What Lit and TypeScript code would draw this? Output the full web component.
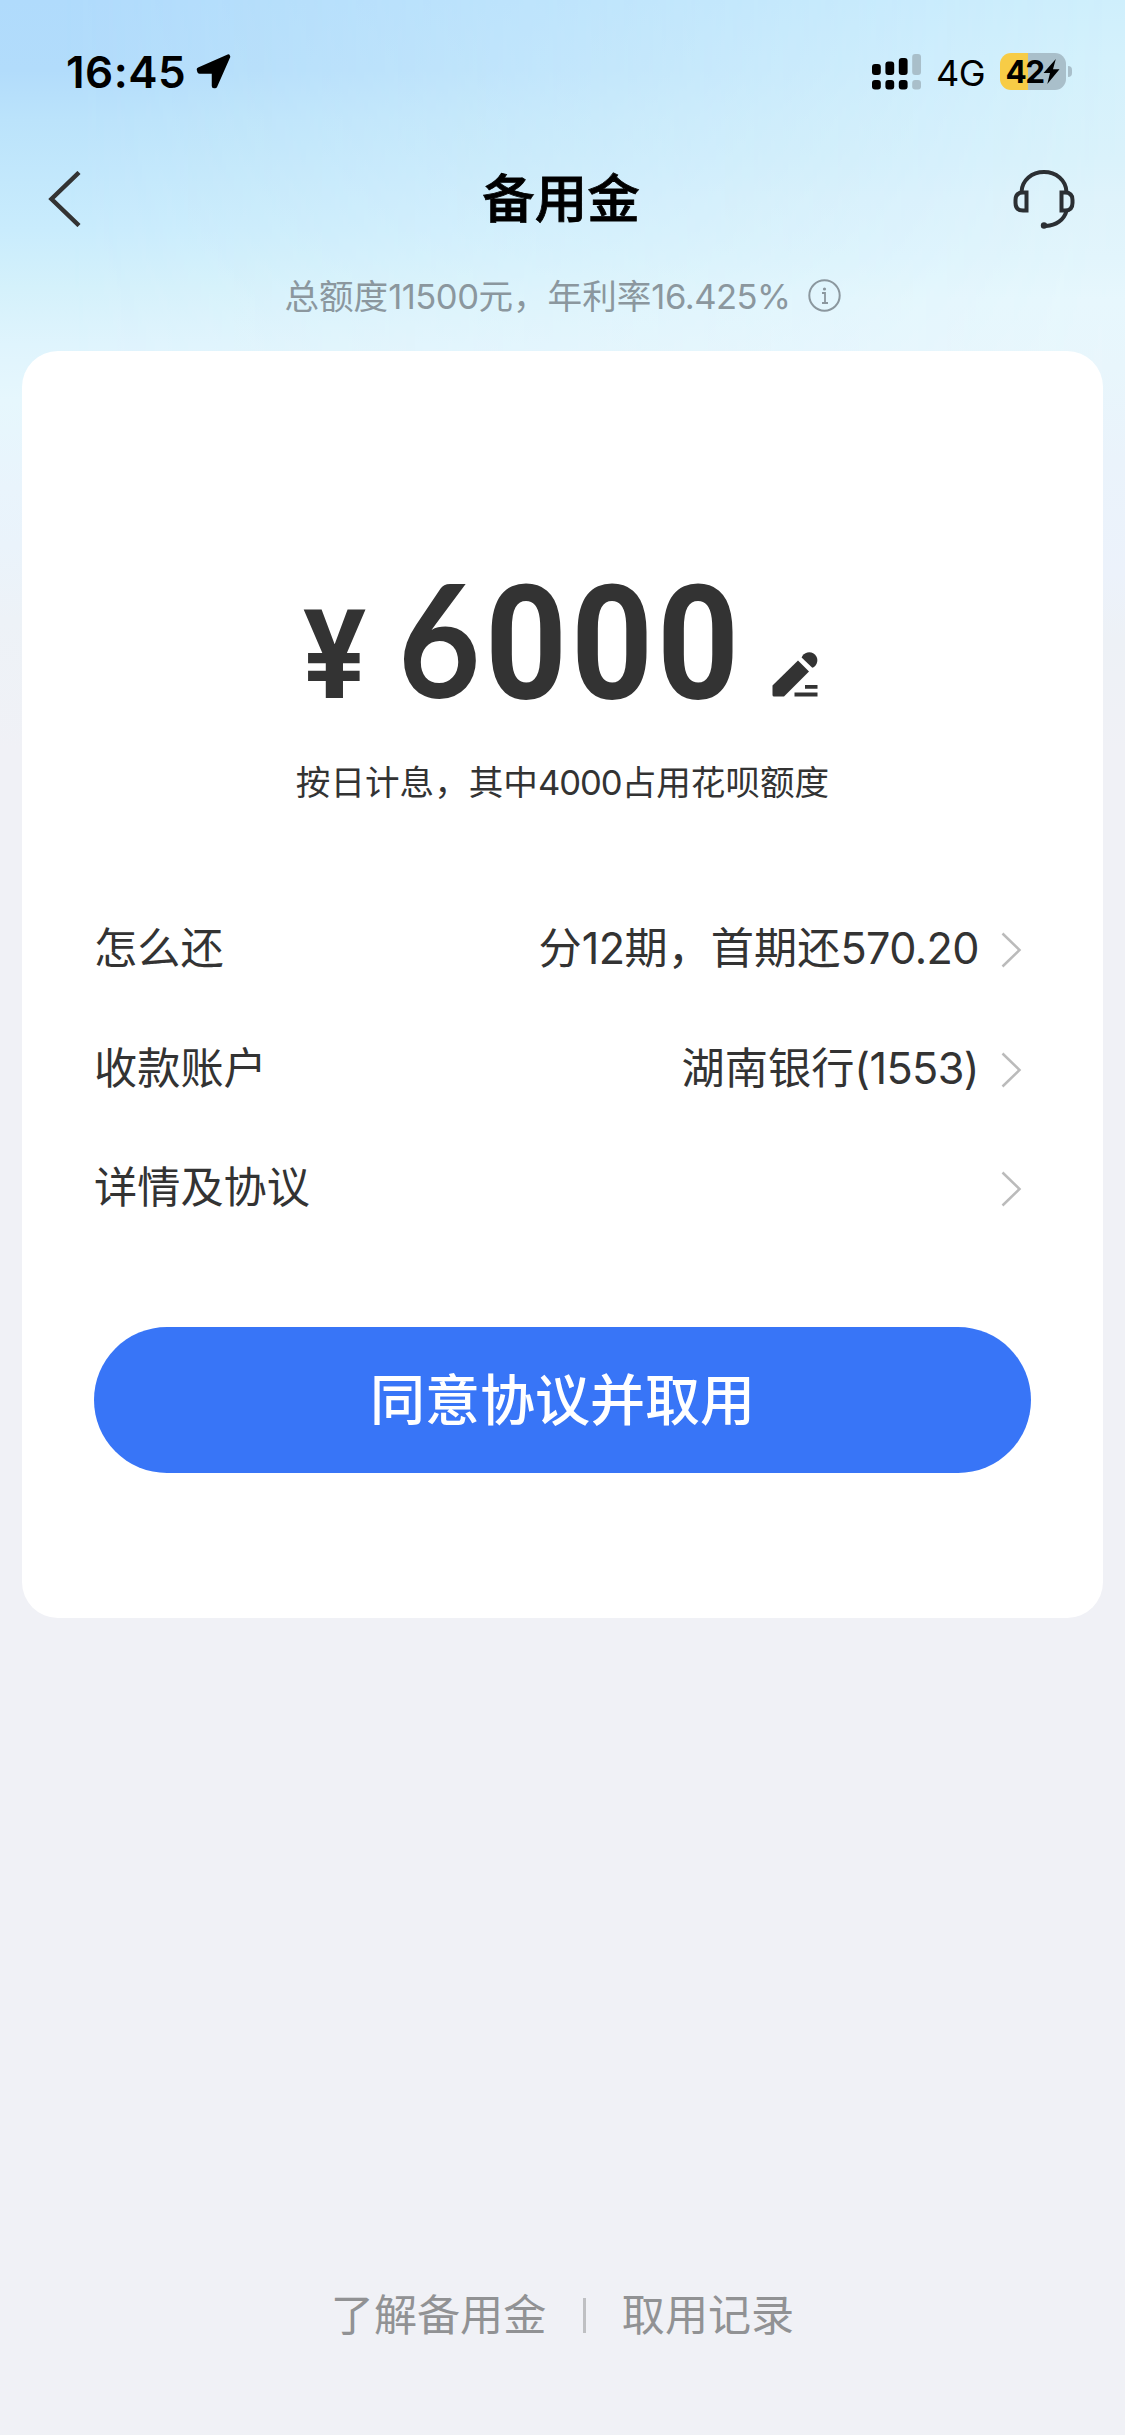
import { LitElement, html, svg, css } from "lit";
import { customElement, property } from "lit/decorators.js";

const textBase = css`
  :host {
    font-family: Inter, "Noto Sans CJK SC", sans-serif;
  }
`;

@customElement("status-bar")
export class StatusBar extends LitElement {
  static styles = [
    textBase,
    css`
      :host {
        display: flex;
        align-items: center;
        height: 142px;
        padding: 0 53px 0 66px;
        box-sizing: border-box;
        color: #000;
      }
      .time {
        font-size: 44px;
        font-weight: 600;
        line-height: 44px;
        letter-spacing: 0.5px;
        padding-top: 1px;
      }
      .arrow {
        margin-left: 10px;
      }
      .signal {
        margin-left: auto;
        padding-top: 1px;
      }
      .network {
        margin-left: 14px;
        font-size: 36px;
        line-height: 44px;
        letter-spacing: -0.5px;
        padding-top: 4px;
      }
      .battery {
        margin-left: 15px;
        display: flex;
        align-items: center;
        justify-content: center;
        width: 66px;
        height: 37px;
        border-radius: 11px;
        background: linear-gradient(to right, #f7cc46 28px, #a9bfca 28px);
      }
      .level {
        font-size: 31.5px;
        font-weight: 700;
        line-height: 37px;
        letter-spacing: -1.6px;
      }
      .nub {
        margin-left: 2px;
        width: 4px;
        height: 11px;
        border-radius: 0 6px 6px 0;
        background: #a9bfca;
      }
    `,
  ];

  render() {
    const bars = [
      [0, 10, 11],
      [13.4, 7.5, 13.5],
      [26.8, 4, 17],
      [40.2, 0, 21],
    ];
    return html`
      <span class="time">16:45</span>
      <svg class="arrow" width="35" height="35" viewBox="0 0 35 35">
        <path
          d="M3 15.500 32 2.700 19 32 18 32 18 17.500 3.500 17.500Z"
          stroke="#000"
          stroke-width="4.500"
          stroke-linejoin="round"
        />
      </svg>
      <svg class="signal" width="50" height="36" viewBox="0 0 50 36">
        ${bars.map(
          ([x, y, h], i) => svg`
            <rect x=${x} y=${y} width="8.800" height=${h} rx="3" fill=${i < 3 ? "#000" : "#a9bfca"} />
            <rect x=${x} y="26" width="8.800" height="9.500" rx="3" fill=${i < 3 ? "#000" : "#a9bfca"} />
          `,
        )}
      </svg>
      <span class="network">4G</span>
      <div class="battery">
        <span class="level">42</span>
        <svg width="17" height="25" viewBox="0 0 17 25">
          <path d="M12.800 0 0.500 14H7L4.300 25 16.500 10.300H10Z" />
        </svg>
      </div>
      <div class="nub"></div>
    `;
  }
}

@customElement("nav-bar")
export class NavBar extends LitElement {
  static styles = [
    textBase,
    css`
      :host {
        display: flex;
        align-items: center;
        justify-content: space-between;
        height: 114px;
        padding: 0 50px 0 47px;
      }
      .title {
        font-size: 52.5px;
        font-weight: 500;
        -webkit-text-stroke: 0.8px #000;
        line-height: 60px;
        color: #000;
      }
      .side {
        width: 64px;
        display: flex;
      }
      .end {
        justify-content: flex-end;
      }
    `,
  ];

  render() {
    return html`
      <div class="side">
        <svg width="36" height="56" viewBox="0 0 36 56" fill="none">
          <path d="M32 1.500 4.500 28 32 54.500" stroke="#333" stroke-width="4.500" />
        </svg>
      </div>
      <span class="title">备用金</span>
      <div class="side end">
        <svg width="62" height="60" viewBox="0 0 62 60" fill="none" stroke="#2b2f33" stroke-width="4">
          <path d="M8.500 23C9 11 19 3 31 3S53 11 53.500 23" />
          <path d="M13.500 23.500H10Q2.500 23.500 2.500 31V34Q2.500 41.500 10 41.500H13.500Z" />
          <path d="M48.500 23.500H52Q59.500 23.500 59.500 31V34Q59.500 41.500 52 41.500H48.500Z" />
          <path d="M53.500 42C51 51 43 56.500 33 57" />
          <circle cx="31" cy="56.500" r="3.200" fill="#2b2f33" stroke="none" />
        </svg>
      </div>
    `;
  }
}

@customElement("info-row")
export class InfoRow extends LitElement {
  @property() label = "";

  static styles = [
    textBase,
    css`
      :host {
        display: flex;
        align-items: center;
        height: 119.7px;
        font-size: 43.2px;
        line-height: 60px;
        color: #333;
      }
      .label {
        flex: 1;
      }
      .value {
        margin-right: 22px;
      }
      .chevron {
        margin-top: 4px;
      }
    `,
  ];

  render() {
    return html`
      <span class="label">${this.label}</span>
      <span class="value"><slot></slot></span>
      <svg class="chevron" width="21" height="36" viewBox="0 0 21 36" fill="none">
        <path d="M1.500 1.500 18.500 18 1.500 34.500" stroke="#bbb" stroke-width="2.500" />
      </svg>
    `;
  }
}

@customElement("app-root")
export class AppRoot extends LitElement {
  static styles = [
    textBase,
    css`
      :host {
        display: block;
      }
      .page {
        position: relative;
        display: flex;
        flex-direction: column;
        width: 1125px;
        height: 2435px;
        overflow: hidden;
        background: #f0f1f6;
      }
      .sky {
        position: absolute;
        inset: 0 0 auto 0;
        height: 800px;
        background: linear-gradient(
          #b0dbfc 0,
          #b2dcfb 70px,
          #bbe3fb 120px,
          #c9ecfd 230px,
          #d4f1fb 287px,
          #dff4fd 344px,
          #e6f7fd 400px,
          #e9f4fc 488px,
          #eaf3fb 545px,
          #edf2f7 620px,
          #f0f1f6 750px
        );
      }
      .glow {
        height: 800px;
        background: linear-gradient(
          #cfeffc 0,
          #d4f1fc 57px,
          #daf2fb 160px,
          #dff3fb 200px,
          #e2f5fc 258px,
          #e7f7fd 300px,
          #e8f6fc 367px,
          #eaf3fb 460px,
          #ecf2fb 574px,
          #edf1f6 640px,
          #f0f1f6 750px
        );
        -webkit-mask-image: linear-gradient(to right, transparent 5%, #000);
        mask-image: linear-gradient(to right, transparent 5%, #000);
      }
      .content {
        position: relative;
        display: flex;
        flex-direction: column;
        flex: 1;
      }
      .quota {
        display: flex;
        align-items: center;
        justify-content: center;
        gap: 17px;
        height: 95px;
        padding-bottom: 16px;
        box-sizing: border-box;
        font-size: 34.6px;
        line-height: 60px;
        color: #8b979e;
      }
      .quota .num {
        letter-spacing: -0.5px;
      }
      .card {
        display: flex;
        flex-direction: column;
        height: 1267px;
        margin: 0 22px;
        padding: 206px 72px 0;
        box-sizing: border-box;
        border-radius: 36px;
        background: #fff;
        color: #333;
      }
      .amount {
        display: flex;
        align-items: baseline;
        height: 160px;
        padding-left: 209px;
        line-height: 160px;
        font-family: Roboto, sans-serif;
        font-weight: 700;
      }
      .yen,
      .six,
      .zeros {
        transform-origin: left;
      }
      .yen {
        font-size: 124px;
        transform: scaleX(0.95);
      }
      .six {
        font-family: Lato, sans-serif;
        font-size: 158px;
        margin-left: 29px;
        margin-right: -5px;
        transform: scaleX(0.9);
      }
      .zeros {
        font-size: 159px;
        letter-spacing: 4.3px;
        margin-right: -28px;
        transform: scaleX(0.9);
      }
      .edit {
        margin-left: 28px;
      }
      .note {
        margin-top: 35px;
        font-size: 34.6px;
        line-height: 60px;
        text-align: center;
      }
      .note .num {
        letter-spacing: -1px;
      }
      .rows {
        margin-top: 76px;
        padding-right: 9px;
      }
      .figures {
        letter-spacing: -0.6px;
      }
      .agree {
        margin-top: 80px;
        height: 146px;
        flex: none;
        border: 0;
        padding: 0;
        border-radius: 73px;
        background: #3875f7;
        color: #fff;
        font-family: inherit;
        font-size: 55px;
        font-weight: 500;
        line-height: 146px;
      }
      .links {
        display: flex;
        align-items: center;
        justify-content: center;
        margin-top: auto;
        height: 60px;
        margin-bottom: 90px;
        font-size: 43.1px;
        line-height: 60px;
        color: #919294;
      }
      .divider {
        width: 2.5px;
        height: 35px;
        margin: 0 36px 0 37px;
        background: #bfc0c3;
      }
    `,
  ];

  render() {
    return html`
      <div class="page">
        <div class="sky"><div class="glow"></div></div>
        <div class="content">
          <status-bar></status-bar>
          <nav-bar></nav-bar>
          <div class="quota">
            <span>总额度<span class="num">11500</span>元，年利率<span class="num">16.425%</span></span>
            <svg width="33" height="33" viewBox="0 0 33 33" fill="none" stroke="#8b979e" stroke-width="2">
              <circle cx="16.500" cy="16.500" r="15.200" />
              <path d="M14 14H17V24M14 24H20" stroke-width="1.800" />
              <circle cx="16.500" cy="10" r="1.600" fill="#8b979e" stroke="none" />
            </svg>
          </div>
          <main class="card">
            <div class="amount">
              <span class="yen">¥</span>
              <span class="six">6</span>
              <span class="zeros">000</span>
              <svg class="edit" width="46" height="46" viewBox="0 0 46 46" fill="#333">
                <path d="M0.500 33.500 26 8.500 37 19.500 12 44.500H2Q0.500 44.500 0.500 43Z" />
                <path d="M29.600 5.600A8.100 8.100 0 1 1 40.300 15.800Z" />
                <path d="M33 33H45.500V36.800H33ZM22.500 40.500H45.500V44.500H22.500Z" />
              </svg>
            </div>
            <div class="note">按日计息，其中<span class="num">4000</span>占用花呗额度</div>
            <div class="rows">
              <info-row label="怎么还">分<span class="figures">12</span>期，首期还<span class="figures">570.20</span></info-row>
              <info-row label="收款账户">湖南银行<span class="figures">(1553)</span></info-row>
              <info-row label="详情及协议"></info-row>
            </div>
            <button class="agree">同意协议并取用</button>
          </main>
          <div class="links">
            <span>了解备用金</span>
            <span class="divider"></span>
            <span>取用记录</span>
          </div>
        </div>
      </div>
    `;
  }
}
